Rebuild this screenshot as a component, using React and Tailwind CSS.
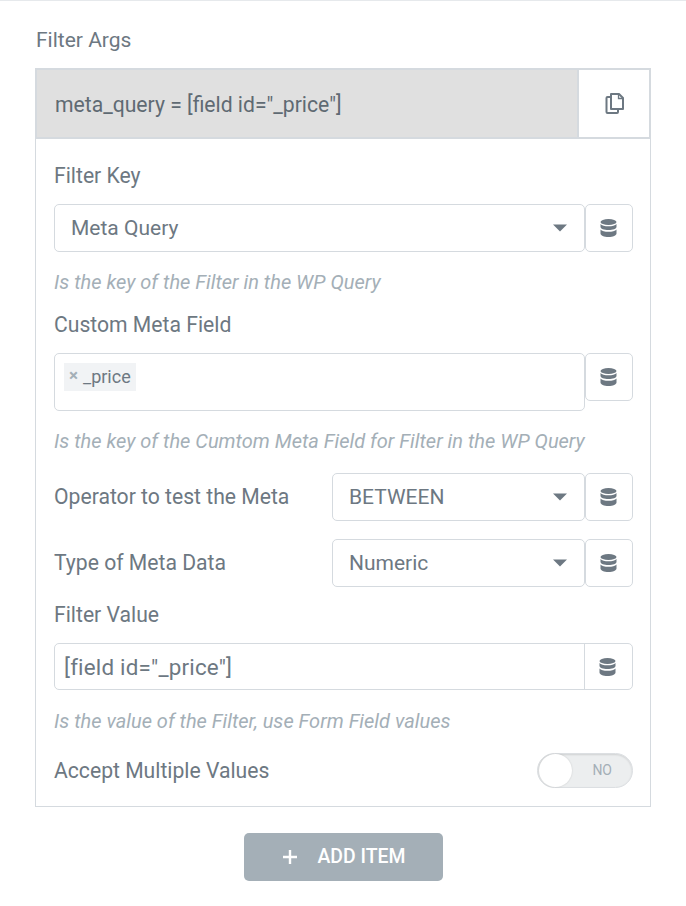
import React from "react";

const DbIcon = () => (
  <svg width="17" height="18" viewBox="0 0 17 18" fill="#6d7882" className="shrink-0 mr-[2px]">
    <ellipse cx="8.500" cy="3" rx="8" ry="3" />
    <path d="M0.500 5v3c0 1.700 3.600 3 8 3s8-1.300 8-3V5c-1.200 1.500-4.400 2.300-8 2.300S1.700 6.500 0.500 5z" />
    <path d="M0.500 10.500v4c0 1.900 3.600 3.500 8 3.500s8-1.600 8-3.500v-4c-1.200 1.500-4.400 2.300-8 2.300s-6.800-.8-8-2.300z" />
  </svg>
);

const Caret = () => (
  <svg width="16" height="8" viewBox="0 0 16 8" className="shrink-0">
    <path d="M1 0.500h14L8 7.500z" fill="#6d7882" />
  </svg>
);

const CopyIcon = () => (
  <svg width="20" height="22" viewBox="0 0 20 22" fill="none" stroke="#6d7882" strokeWidth="2" className="ml-[2px] mb-[2px]">
    <path d="M6 2V17h12V6l-4-4H6z" strokeLinejoin="round" />
    <path d="M13.500 2v4.500H18" strokeWidth="1.300" />
    <path d="M6 5H2.500a1 1 0 0 0-1 1v14a1 1 0 0 0 1 1H12a1 1 0 0 0 1-1v-3" />
  </svg>
);

const DbButton = () => (
  <button className="w-12 h-full shrink-0 border border-[#d5dadf] rounded-[5px] flex items-center justify-center bg-white">
    <DbIcon />
  </button>
);

const Select = ({ value, className }) => (
  <div className={`flex items-center justify-between h-12 pl-4 pr-4 border border-[#d5dadf] rounded-[5px] bg-white text-[21px] text-[#6d7882] ${className}`}>
    <span className="pt-[2px]">{value}</span>
    <Caret />
  </div>
);

const Hint = ({ children, className }) => (
  <p className={`italic text-[20px] leading-6 text-[#a4afb7] ${className}`}>{children}</p>
);

const Label = ({ children, className }) => (
  <div className={`text-[21.150px] leading-6 text-[#6d7882] ${className}`}>{children}</div>
);

export default function App() {
  return (
    <div className="w-[686px] h-[906px] bg-white border-t border-[#e6e9ec] font-['Roboto',sans-serif] overflow-hidden">
      <div className="pl-9 pt-[27px] text-[21px] leading-6 text-[#6d7882]">Filter Args</div>

      <div className="ml-[35px] mt-[16px] w-[616px] h-[739px] border border-[#d5dadf]">
        {/* repeater header */}
        <div className="flex h-[71px] -mt-px -mx-px border-2 border-[#d5dadf]">
          <div className="flex-1 bg-[#e0e0e0] flex items-center pl-[18px] pt-[2px] text-[21.150px] text-[#5f6a73]">
            meta_query = [field id="_price"]
          </div>
          <div className="w-[72px] border-l-2 border-[#d5dadf] flex items-center justify-center bg-white">
            <CopyIcon />
          </div>
        </div>

        <div className="pl-[18px] pr-[17px]">
          <Label className="mt-[25px]">Filter Key</Label>
          <div className="flex h-12 mt-[16px]">
            <Select value="Meta Query" className="flex-1" />
            <DbButton />
          </div>
          <Hint className="mt-[18px]">Is the key of the Filter in the WP Query</Hint>

          <Label className="mt-[19px]">Custom Meta Field</Label>
          <div className="flex h-[58px] mt-[16px]">
            <div className="flex-1 border border-[#d5dadf] rounded-[5px] pl-[9px] pt-[9px]">
              <div className="inline-flex items-center h-7 pl-[5px] pr-[5px] pb-[2px] bg-[#f1f3f5] text-[18px] text-[#6d7882]">
                <span className="text-[#a4afb7] text-[17px] font-bold mr-[5px]">×</span>
                _price
              </div>
            </div>
            <div className="h-12">
              <DbButton />
            </div>
          </div>
          <Hint className="mt-[18px]">Is the key of the Cumtom Meta Field for Filter in the WP Query</Hint>

          <div className="flex items-center h-12 mt-[20px]">
            <Label className="w-[278px]">Operator to test the Meta</Label>
            <Select value="BETWEEN" className="flex-1" />
            <DbButton />
          </div>

          <div className="flex items-center h-12 mt-[18px]">
            <Label className="w-[278px]">Type of Meta Data</Label>
            <Select value="Numeric" className="flex-1" />
            <DbButton />
          </div>

          <Label className="mt-[16px]">Filter Value</Label>
          <div className="flex h-[47px] mt-[16px] border border-[#d5dadf] rounded-[5px]">
            <div className="flex-1 flex items-center pl-[9px] pt-[2px] text-[22.400px] tracking-[0.2px] [font-variant-ligatures:none] text-[#6d7882]">[field id="_price"]</div>
            <div className="w-12 border-l border-[#d5dadf] flex items-center justify-center">
              <DbIcon />
            </div>
          </div>
          <Hint className="mt-[19px]">Is the value of the Filter, use Form Field values</Hint>

          <div className="flex items-center justify-between h-[35px] mt-[20px]">
            <Label>Accept Multiple Values</Label>
            <div className="relative w-24 h-[35px] rounded-full bg-[#eceeef] border border-[#dcdfe2] shadow-[inset_0_1px_2px_rgba(0,0,0,0.12)] flex items-center justify-end pr-[20px] text-[14px] text-[#a4afb7]">
              NO
              <span className="absolute left-[1px] top-0 w-[33px] h-[33px] rounded-full bg-white shadow-[0_0_2px_rgba(0,0,0,0.15)]" />
            </div>
          </div>
        </div>
      </div>

      <div className="flex justify-center mt-[26px] pl-[1px]">
        <button className="w-[199px] h-12 rounded-[5px] bg-[#a4afb7] text-white text-[19.400px] font-medium flex items-center justify-center">
          <svg width="16" height="16" viewBox="0 0 16 16" className="mr-[20px]">
            <path d="M8 1v14M1 8h14" stroke="white" strokeWidth="2.400" />
          </svg>
          ADD ITEM
        </button>
      </div>
    </div>
  );
}
